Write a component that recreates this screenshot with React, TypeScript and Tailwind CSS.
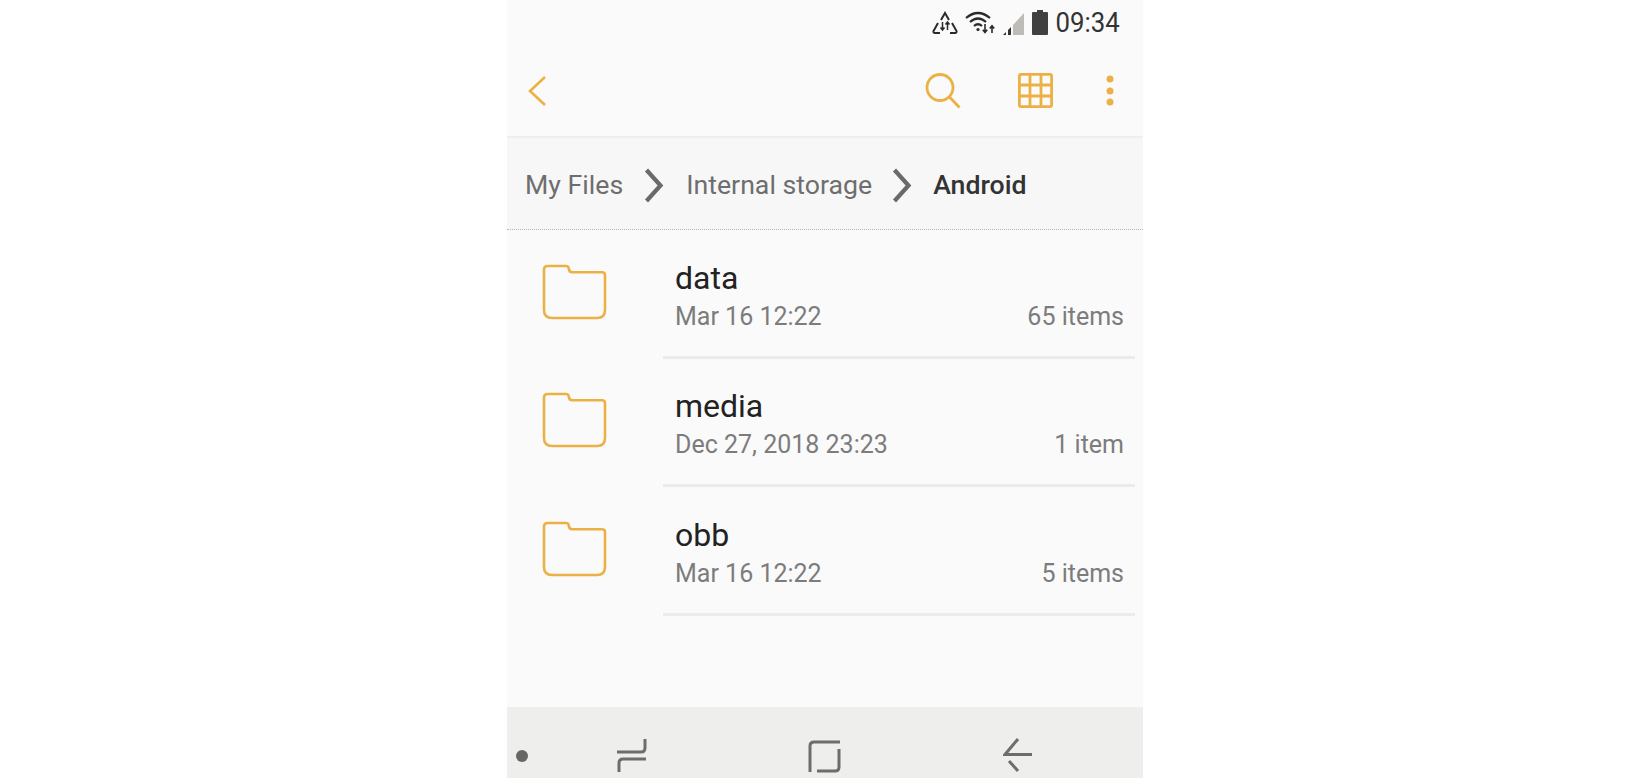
import React from "react";

const AMBER = "#ecb145";

function Folder() {
  return (
    <svg width="65" height="56" viewBox="0 0 65 56" fill="none" stroke={AMBER} strokeWidth="2.6" className="shrink-0">
      <path d="M2 5.5 Q2 2 5.5 2 H24 Q26.5 2 26.8 4.5 Q27.2 8.2 30 8.2 H60 Q63 8.2 63 11 V46 Q63 54 55 54 H10 Q2 54 2 46 Z" />
    </svg>
  );
}

function Crumb() {
  return (
    <svg width="20" height="35" viewBox="0 0 20 35" fill="none" stroke="#6a6a6a" strokeWidth="4.2" className="shrink-0">
      <path d="M2.5 2 L16.5 17.5 L2.5 33" />
    </svg>
  );
}

function StatusIcons() {
  return (
    <>
      <svg width="26" height="24" viewBox="0 0 26 24" fill="none" stroke="#2a2a2a" strokeWidth="2" className="shrink-0">
        <path d="M9 9 L13 2 L17 9" />
        <path d="M6 12 L1.5 20 Q1 22 3 22 H8" />
        <path d="M20 12 L24.5 20 Q25 22 23 22 H18" />
        <path d="M10.5 11 V19 M8.5 16.5 L10.5 19 L12.5 16.5" strokeWidth="1.5" />
        <path d="M15.5 19 V11 M13.5 13.5 L15.5 11 L17.5 13.5" strokeWidth="1.5" />
      </svg>
      <svg width="32" height="24" viewBox="0 0 32 24" fill="none" stroke="#2a2a2a" strokeWidth="2.2" className="ml-[7px] shrink-0">
        <path d="M1 7 Q13 -3 25 7" />
        <path d="M5 11 Q13 4 21 11" />
        <path d="M9 15 Q13 11.5 17 15" />
        <circle cx="13" cy="18.5" r="1.6" fill="#2a2a2a" stroke="none" />
        <path d="M20 13 V21 M17.8 18.8 L20 21.5 L22.2 18.8" strokeWidth="1.6" />
        <path d="M27 22 V15 M24.8 17.5 L27 14.8 L29.2 17.5" strokeWidth="1.6" />
      </svg>
      <svg width="24" height="24" viewBox="0 0 24 24" className="ml-[3px] shrink-0">
        <path d="M3 24 L6 21 V24 Z" fill="#333" />
        <path d="M8 19 L11 16 V24 H8 Z" fill="#333" />
        <path d="M13 14 L24 2 V24 H13 Z" fill="#bdbcb6" />
      </svg>
      <svg width="16" height="25" viewBox="0 0 16 25" className="ml-[8px] shrink-0">
        <path d="M5 0 H11 V2 H15 Q16 2 16 3 V24 Q16 25 15 25 H1 Q0 25 0 24 V3 Q0 2 1 2 H5 Z" fill="#404040" />
      </svg>
    </>
  );
}

const rows = [
  { name: "data", date: "Mar 16 12:22", count: "65 items" },
  { name: "media", date: "Dec 27, 2018 23:23", count: "1 item" },
  { name: "obb", date: "Mar 16 12:22", count: "5 items" },
];

export default function App() {
  return (
    <div className="h-[778px] overflow-hidden bg-white" style={{ fontFamily: "Roboto, sans-serif" }}>
      <div className="mx-auto flex h-[778px] w-[636px] flex-col bg-[#fafafa]">
        <div className="flex h-[44px] items-center justify-end pr-[23px] pt-[1px]">
          <StatusIcons />
          <span className="ml-[2px] origin-right scale-x-[0.92] text-[28px] leading-none text-[#333333]">09:34</span>
        </div>

        <div className="flex h-[92px] items-start pt-[28px]">
          <svg width="20" height="32" viewBox="0 0 20 32" fill="none" stroke={AMBER} strokeWidth="2.6" className="ml-[20px] mt-[3px] shrink-0">
            <path d="M18 2 L3 16 L18 30" />
          </svg>
          <svg width="36" height="37" viewBox="0 0 36 37" fill="none" stroke={AMBER} strokeWidth="2.8" className="ml-[378px] shrink-0">
            <circle cx="15" cy="15.5" r="13" />
            <path d="M24.5 25 L34.5 35.5" />
          </svg>
          <svg width="35" height="35" viewBox="0 0 35 35" fill="none" stroke={AMBER} strokeWidth="2.8" className="ml-[57px] mt-[1px] shrink-0">
            <rect x="1.4" y="1.4" width="32.2" height="32.2" rx="1.5" />
            <path d="M12 1 V34 M23 1 V34 M1 12 H34 M1 23 H34" />
          </svg>
          <svg width="8" height="32" viewBox="0 0 8 32" fill={AMBER} className="ml-[53px] mt-[3px] shrink-0">
            <circle cx="4" cy="4" r="3.5" />
            <circle cx="4" cy="16" r="3.5" />
            <circle cx="4" cy="27" r="3.5" />
          </svg>
        </div>

        <div className="flex h-[94px] items-center border-t-2 border-b border-t-[#eeeeee] border-b-[#b5b5b5] bg-[#f7f7f7] pl-[18px] pt-[3px] text-[26.7px] [border-bottom-style:dotted]">
          <span className="text-[#6e6e6e]">My Files</span>
          <span className="ml-[21px] mr-[22px] flex"><Crumb /></span>
          <span className="text-[#6e6e6e]">Internal storage</span>
          <span className="ml-[20px] mr-[21px] flex"><Crumb /></span>
          <span className="font-medium text-[#333333]">Android</span>
        </div>

        <div className="flex-1">
          {rows.map((r) => (
            <div key={r.name} className="flex h-[128.3px] items-start pt-[35px]">
              <div className="ml-[35px] -mt-[1px]"><Folder /></div>
              <div className="ml-[56px] mr-[8px] flex h-[94px] flex-1 flex-col border-b-[3px] border-[#ebebeb] pl-[12px]">
                <div className="-mt-[5px] text-[32px] leading-[36px] text-[#222222]">{r.name}</div>
                <div className="mt-[7px] flex items-center justify-between pr-[11px] text-[25px] leading-[28px] text-[#7c7c7c]">
                  <span>{r.date}</span>
                  <span>{r.count}</span>
                </div>
              </div>
            </div>
          ))}
        </div>

        <div className="flex h-[71px] items-start bg-[#eeeeec] pt-[31px]">
          <span className="ml-[9px] mt-[12px] block h-[12px] w-[12px] shrink-0 rounded-full bg-[#666666]" />
          <svg width="32" height="36" viewBox="0 0 32 36" fill="none" stroke="#6d6d6d" strokeWidth="3" className="ml-[88px] shrink-0">
            <path d="M1 14 H25 Q29 14 29 10 V1" />
            <path d="M30 21 H7 Q3 21 3 25 V34" />
          </svg>
          <svg width="33" height="33" viewBox="0 0 33 33" fill="none" stroke="#6d6d6d" strokeWidth="3" className="ml-[160px] mt-[2px] shrink-0">
            <path d="M2 32 V6 Q2 2 6 2 H32" />
            <path d="M9 31 H27 Q31 31 31 27 V9" />
          </svg>
          <svg width="29" height="35" viewBox="0 0 29 35" fill="none" stroke="#6d6d6d" strokeWidth="3" className="ml-[162px] shrink-0">
            <path d="M15 1 L2 16.5 H29" />
            <path d="M6 23 L15 33" />
          </svg>
        </div>
      </div>
    </div>
  );
}
